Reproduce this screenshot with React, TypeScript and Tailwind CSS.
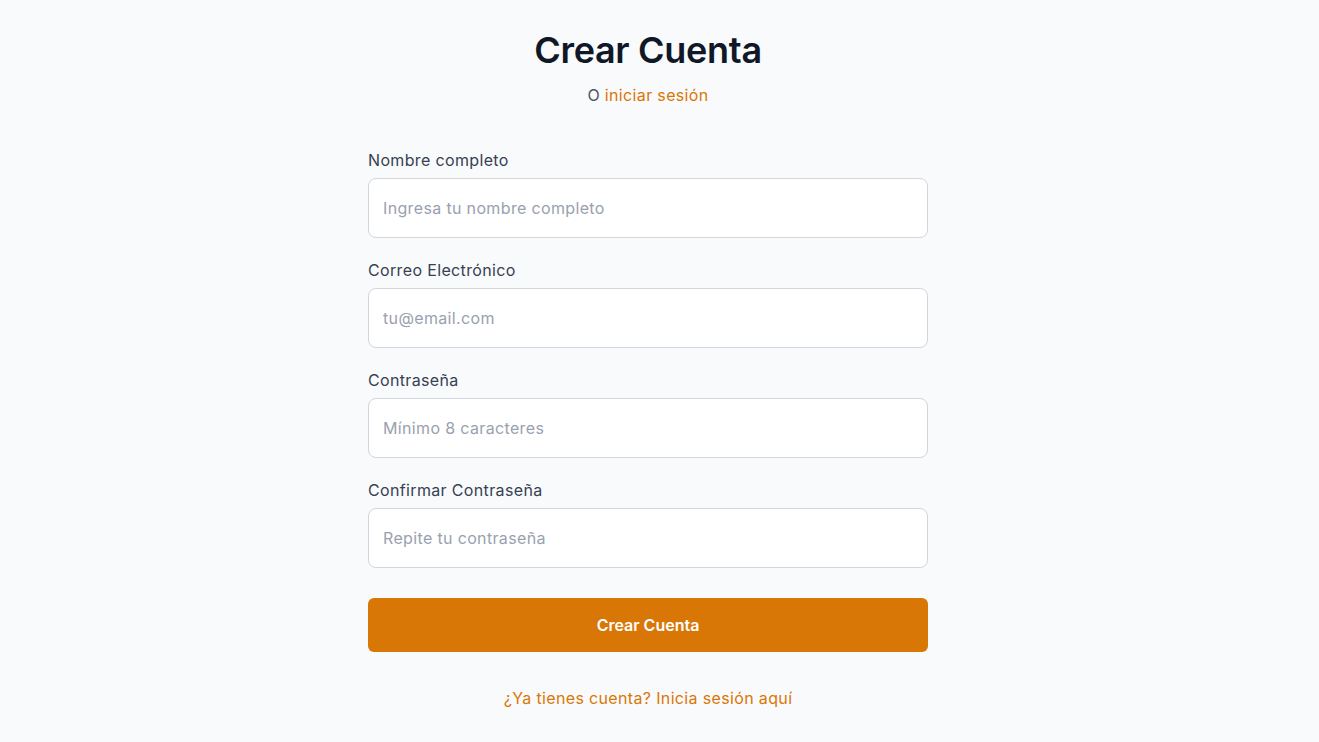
import React, { useState } from 'react';

const FIELDS = [
  { id: 'name', label: 'Nombre completo', type: 'text', placeholder: 'Ingresa tu nombre completo' },
  { id: 'email', label: 'Correo Electrónico', type: 'email', placeholder: 'tu@email.com' },
  { id: 'password', label: 'Contraseña', type: 'password', placeholder: 'Mínimo 8 caracteres' },
  { id: 'confirm', label: 'Confirmar Contraseña', type: 'password', placeholder: 'Repite tu contraseña' },
];

export default function App() {
  const [values, setValues] = useState<Record<string, string>>({});

  return (
    <div className="min-h-screen bg-gray-50 flex justify-center pr-[23px] font-['Inter','Noto_Sans',sans-serif] tracking-[0.35px]">
      <div className="w-[560px] pt-[30px] pb-10">
        {/* Header */}
        <h1 className="text-center text-[36px] leading-10 font-semibold text-gray-900 tracking-[-0.3px]">Crear Cuenta</h1>
        <p className="mt-[13px] text-center text-base leading-6 text-gray-600">
          O <a href="#" className="text-[#d97706]">iniciar sesión</a>
        </p>

        {/* Form */}
        <form className="mt-[41px] flex flex-col gap-5" onSubmit={e => e.preventDefault()}>
          {FIELDS.map(f => (
            <div key={f.id} className="flex flex-col">
              <label htmlFor={f.id} className="text-base leading-6 font-normal text-gray-700 mb-1.5">
                {f.label}
              </label>
              <input
                id={f.id}
                type={f.type}
                placeholder={f.placeholder}
                value={values[f.id] || ''}
                onChange={e => setValues({ ...values, [f.id]: e.target.value })}
                className="h-[60px] w-full rounded-lg border border-gray-300 bg-white px-[14px] text-base tracking-[0.35px] text-gray-900 placeholder:text-gray-400 outline-none"
              />
            </div>
          ))}

          <button
            type="submit"
            className="mt-[10px] h-[54px] w-full rounded-md bg-[#d97706] text-base font-semibold tracking-normal text-white"
          >
            Crear Cuenta
          </button>
        </form>

        <p className="mt-[34px] text-center text-base leading-6">
          <a href="#" className="text-[#d97706]">¿Ya tienes cuenta? Inicia sesión aquí</a>
        </p>
      </div>
    </div>
  );
}
